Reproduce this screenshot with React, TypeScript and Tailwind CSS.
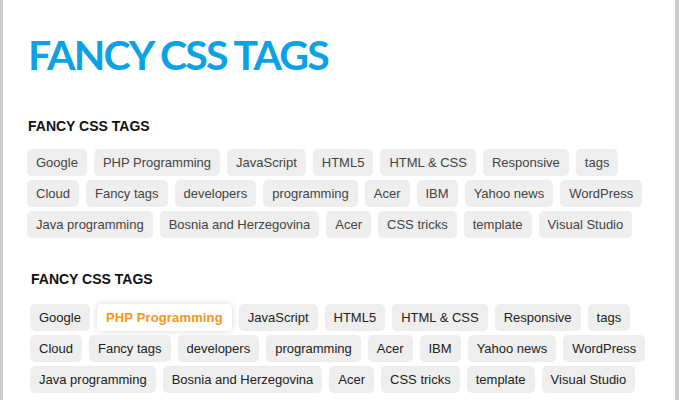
const tags = [
  'Google',
  'PHP Programming',
  'JavaScript',
  'HTML5',
  'HTML & CSS',
  'Responsive',
  'tags',
  'Cloud',
  'Fancy tags',
  'developers',
  'programming',
  'Acer',
  'IBM',
  'Yahoo news',
  'WordPress',
  'Java programming',
  'Bosnia and Herzegovina',
  'Acer',
  'CSS tricks',
  'template',
  'Visual Studio',
];

function TagCloud({ active, dark }: { active?: string; dark?: boolean }) {
  return (
    <ul className="flex flex-wrap gap-x-[7px] gap-y-[4px]">
      {tags.map((tag, i) => {
        const isActive = tag === active;
        return (
          <li
            key={i}
            className={
              isActive
                ? 'h-[27px] flex items-center px-[9px] rounded-[5px] bg-white text-[13px] font-bold text-[#f7941e] tracking-[0.15px] shadow-[0_0_7px_rgba(0,0,0,0.16)]'
                : dark
                  ? 'h-[27px] flex items-center px-[9px] rounded-[5px] bg-[#eeeeee] text-[13px] text-[#222]'
                  : 'h-[27px] flex items-center px-[9px] rounded-[5px] bg-[#eeeeee] text-[13px] text-[#444]'
            }
          >
            {tag}
          </li>
        );
      })}
    </ul>
  );
}

function App() {
  return (
    <div className="min-h-screen bg-[#cccccc] pl-[3px] pr-[4px] font-['Liberation_Sans',Arial,sans-serif]">
      <div className="bg-white min-h-screen">
        {/* titulo principal */}
        <h1 className="pt-[35px] pl-[25px] font-['Lato',sans-serif] font-bold text-[41px] leading-[40px] tracking-[-1.8px] text-[#0aa1e6]">
          FANCY CSS TAGS
        </h1>

        <section className="pl-[24px] pr-[20px] mt-[43px]">
          <h3 className="text-[14px] leading-[16px] font-bold text-[#111] pl-[1px]">FANCY CSS TAGS</h3>
          <div className="mt-[15px]">
            <TagCloud />
          </div>
        </section>

        <section className="pl-[27px] pr-[17px] mt-[33px]">
          <h3 className="text-[14px] leading-[16px] font-bold text-[#111] pl-[1px]">FANCY CSS TAGS</h3>
          <div className="mt-[17px]">
            <TagCloud active="PHP Programming" dark />
          </div>
        </section>
      </div>
    </div>
  );
}

export default App;
